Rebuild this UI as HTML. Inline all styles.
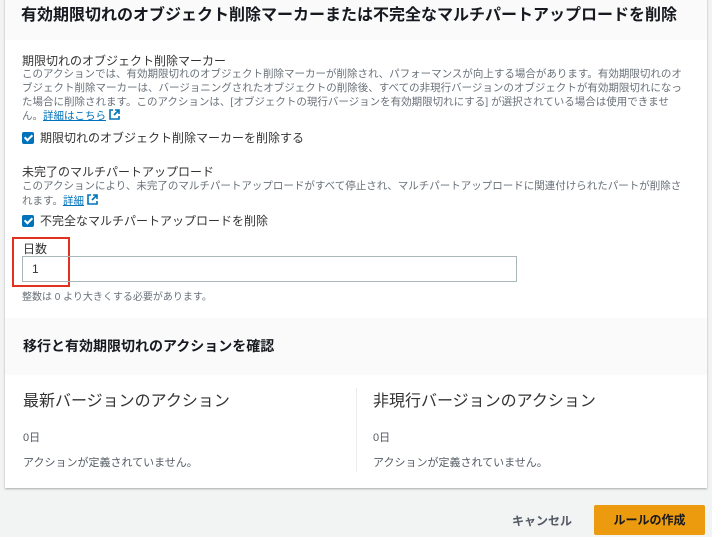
<!DOCTYPE html>
<html><head><meta charset="utf-8"><style>
*{margin:0;padding:0;box-sizing:border-box}
body{width:712px;height:537px;background:#f2f3f3;font-family:"Liberation Sans","Noto Sans CJK JP",sans-serif;position:relative;overflow:hidden;color:#16191f}
.card{position:absolute;left:5px;top:-2px;width:702px;height:490px;background:#fff;box-shadow:0 1px 2px rgba(0,0,0,.3)}
.hd{position:absolute;left:0;width:702px;background:#fafafa}
.a{position:absolute;white-space:nowrap}
.d{font-size:10.5px;color:#687078;line-height:13.8px;white-space:normal;width:665px}
.lk{color:#0073bb;text-decoration:underline}
.cb{display:inline-block;width:12px;height:12px;background:#0073bb;border-radius:2px;vertical-align:-2px;margin-right:6px;position:relative}
.cb:after{content:"";position:absolute;left:4px;top:1px;width:3px;height:6px;border:solid #fff;border-width:0 2px 2px 0;transform:rotate(45deg)}
svg.ext{width:11px;height:11px;margin-left:3px;vertical-align:-1px}
</style></head><body>
<div class="card">
<div class="hd" style="top:0;height:42px"></div>
<div class="a" style="left:16px;top:3px;font-size:16px;font-weight:bold">有効期限切れのオブジェクト削除マーカーまたは不完全なマルチパートアップロードを削除</div>
<div class="a" style="left:17px;top:54px;font-size:12px;color:#333">期限切れのオブジェクト削除マーカー</div>
<div class="a d" style="left:17px;top:70px">このアクションでは、有効期限切れのオブジェクト削除マーカーが削除され、パフォーマンスが向上する場合があります。有効期限切れのオブジェクト削除マーカーは、バージョニングされたオブジェクトの削除後、すべての非現行バージョンのオブジェクトが有効期限切れになった場合に削除されます。このアクションは、[オブジェクトの現行バージョンを有効期限切れにする] が選択されている場合は使用できません。<span class="lk">詳細はこちら</span><svg class="ext" viewBox="0 0 11 11"><path d="M4 1H1v9h9V7" fill="none" stroke="#0073bb" stroke-width="1.6"/><path d="M6 1h4v4M10 1L5 6" fill="none" stroke="#0073bb" stroke-width="1.6"/></svg></div>
<div class="a" style="left:17px;top:131px;font-size:12px;color:#333"><span class="cb"></span>期限切れのオブジェクト削除マーカーを削除する</div>
<div class="a" style="left:17px;top:165px;font-size:12px;color:#333">未完了のマルチパートアップロード</div>
<div class="a d" style="left:17px;top:182px">このアクションにより、未完了のマルチパートアップロードがすべて停止され、マルチパートアップロードに関連付けられたパートが削除されます。<span class="lk">詳細</span><svg class="ext" viewBox="0 0 11 11"><path d="M4 1H1v9h9V7" fill="none" stroke="#0073bb" stroke-width="1.6"/><path d="M6 1h4v4M10 1L5 6" fill="none" stroke="#0073bb" stroke-width="1.6"/></svg></div>
<div class="a" style="left:17px;top:214px;font-size:12px;color:#333"><span class="cb"></span>不完全なマルチパートアップロードを削除</div>
<div class="a" style="left:7px;top:239px;width:58px;height:50px;border:2px solid #e0321e"></div>
<div class="a" style="left:18px;top:242px;font-size:12px;color:#333">日数</div>
<div class="a" style="left:17px;top:258px;width:495px;height:26px;border:1px solid #aab7b8;font-size:12px;color:#333;padding:5px 9px">1</div>
<div class="a" style="left:17px;top:290px;font-size:10px;color:#687078">整数は 0 より大きくする必要があります。</div>
<div class="hd" style="top:320px;height:57px"></div>
<div class="a" style="left:18px;top:338px;font-size:14px;font-weight:bold">移行と有効期限切れのアクションを確認</div>
<div class="a" style="left:18px;top:389px;font-size:16px;color:#333">最新バージョンのアクション</div>
<div class="a" style="left:368px;top:389px;font-size:16px;color:#333">非現行バージョンのアクション</div>
<div class="a" style="left:351px;top:390px;width:1px;height:84px;background:#eaeded"></div>
<div class="a" style="left:18px;top:431px;font-size:11px;color:#545b64">0日</div>
<div class="a" style="left:368px;top:431px;font-size:11px;color:#545b64">0日</div>
<div class="a" style="left:18px;top:456px;font-size:11px;color:#545b64">アクションが定義されていません。</div>
<div class="a" style="left:368px;top:456px;font-size:11px;color:#545b64">アクションが定義されていません。</div>
</div>
<div class="a" style="left:512px;top:512px;font-size:12px;color:#545b64;font-weight:bold">キャンセル</div>
<div class="a" style="left:594px;top:505px;width:111px;height:30px;background:#ec9a0e;border-radius:2px;font-size:12px;font-weight:bold;color:#16191f;text-align:center;line-height:30px">ルールの作成</div>
</body></html>
